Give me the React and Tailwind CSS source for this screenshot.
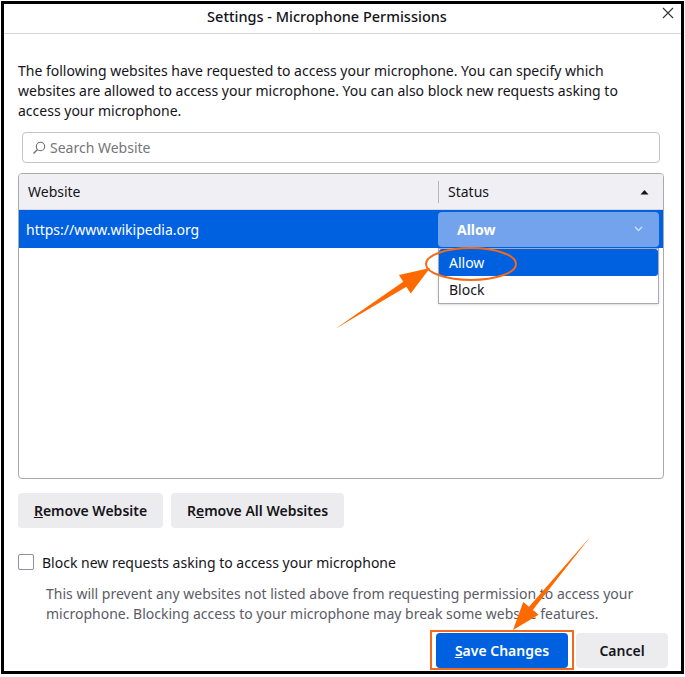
import React from "react";

const F = { fontFamily: '"Noto Sans", "Open Sans", sans-serif' };

export default function App() {
  return (
    <div className="w-[685px] h-[677px] bg-white relative pl-[1px] pt-[1px]" style={F}>
      <div className="w-[683px] h-[673px] border-[3px] border-black flex flex-col text-[14px] text-[#15141a]">
        {/* Title bar */}
        <div className="h-[30px] border-b border-[#d4d4d4] relative flex justify-center pr-[31px] pt-[2px]">
          <span className="text-[14.5px] leading-[20px] font-medium text-[#15141a]">Settings - Microphone Permissions</span>
          <svg className="absolute right-[7px] top-[3px]" width="12" height="12" viewBox="0 0 12 12">
            <path d="M1 1 L11 11 M11 1 L1 11" stroke="#333" strokeWidth="1.1" fill="none" />
          </svg>
        </div>

        <div className="pl-[14px] pr-[17px] flex flex-col">
          <p className="mt-[27px] leading-[20px] whitespace-nowrap">
            The following websites have requested to access your microphone. You can specify which
            <br />
            websites are allowed to access your microphone. You can also block new requests asking to
            <br />
            access your microphone.
          </p>

          {/* Search */}
          <div className="mt-[11px] mx-[4px] h-[31px] border border-[#c4c4c8] rounded-[4px] flex items-center pl-[9px] gap-[4px]">
            <svg width="14" height="14" viewBox="0 0 14 14">
              <circle cx="8.5" cy="5.5" r="4.2" stroke="#6b6b70" strokeWidth="1.1" fill="none" />
              <path d="M5.5 8.5 L1.5 12.5" stroke="#6b6b70" strokeWidth="1.2" />
            </svg>
            <span className="text-[#75757a]">Search Website</span>
          </div>

          {/* Table */}
          <div className="mt-[10px] h-[306px] border border-[#a9a9b0] rounded-[4px] relative">
            <div className="h-[36px] bg-[#f0f0f4] rounded-t-[3px] flex items-center border-b border-[#d8d8dc]">
              <div className="w-[419px] pl-[9px]">Website</div>
              <div className="w-[1px] h-[22px] bg-[#b8b8bc]" />
              <div className="flex-1 flex items-center justify-between pl-[9px] pr-[14px]">
                <span>Status</span>
                <svg width="9" height="6" viewBox="0 0 9 6">
                  <path d="M0.5 5.5 L4.5 1 L8.5 5.5 Z" fill="#15141a" />
                </svg>
              </div>
            </div>
            <div className="h-[38px] bg-[#0061e0] flex items-center text-white">
              <div className="w-[419px] pl-[7px]">https://www.wikipedia.org</div>
              <div className="w-[221px] h-[35px] bg-[#73a3ec] rounded-[4px] flex items-center justify-between pl-[19px] pr-[16px]">
                <span className="font-bold">Allow</span>
                <svg width="9" height="6" viewBox="0 0 9 6">
                  <path d="M1 1 L4.5 4.5 L8 1" stroke="#dbe7fb" strokeWidth="1.2" fill="none" />
                </svg>
              </div>
            </div>
            {/* Dropdown menu */}
            <div className="absolute left-[419px] top-[74px] w-[221px] h-[56px] bg-white border border-[#a9a9b0] shadow-sm flex flex-col">
              <div className="h-[27px] bg-[#0061e0] rounded-[3px] text-white flex items-center pl-[10px]">Allow</div>
              <div className="h-[27px] flex items-center pl-[10px]">Block</div>
            </div>
          </div>

          {/* Remove buttons */}
          <div className="mt-[14px] flex gap-[8px]">
            <div className="h-[35px] w-[145px] bg-[#ececee] rounded-[4px] flex items-center justify-center font-semibold">
              <span><span className="underline">R</span>emove Website</span>
            </div>
            <div className="h-[35px] w-[173px] bg-[#ececee] rounded-[4px] flex items-center justify-center font-semibold">
              <span>R<span className="underline">e</span>move All Websites</span>
            </div>
          </div>

          {/* Checkbox */}
          <div className="mt-[24px] h-[20px] flex items-center gap-[8px]">
            <div className="w-[16px] h-[16px] border border-[#8f8f9d] rounded-[2px] bg-white" />
            <span>Block new requests asking to access your microphone</span>
          </div>
          <p className="mt-[12px] ml-[28px] leading-[20px] text-[#5b5b66] whitespace-nowrap">
            This will prevent any websites not listed above from requesting permission to access your
            <br />
            microphone. Blocking access to your microphone may break some website features.
          </p>

          {/* Bottom buttons */}
          <div className="mt-[9px] flex justify-end gap-[8px] mr-[-4px]">
            <div className="h-[35px] w-[132px] bg-[#0061e0] rounded-[4px] text-white font-semibold flex items-center justify-center">
              <span><span className="underline">S</span>ave Changes</span>
            </div>
            <div className="h-[35px] w-[92px] bg-[#ececee] rounded-[4px] font-semibold flex items-center justify-center">
              Cancel
            </div>
          </div>
        </div>
      </div>

      {/* Annotations */}
      <svg className="absolute left-0 top-0 pointer-events-none" width="685" height="677" viewBox="0 0 685 677">
        <ellipse cx="471" cy="264" rx="45" ry="16" fill="none" stroke="#f26a1b" strokeWidth="2" />
        <polygon points="335,329 406.4,286.7 410.7,293.5 430,268 398.9,274.9 403.2,281.7" fill="#ff6a00" />
        <polygon points="591,536 532.8,610 538.6,614.8 513,630 523.2,602 529,606.8" fill="#ff6a00" />
        <rect x="431" y="631" width="142" height="38" fill="none" stroke="#f26a1b" strokeWidth="2" />
      </svg>
    </div>
  );
}
